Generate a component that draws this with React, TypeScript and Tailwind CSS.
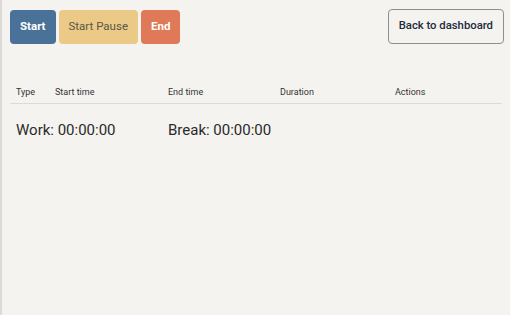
export default function App() {
  return (
    <div
      className="w-[510px] h-[315px] bg-[#f5f3ef] border-l-2 border-[#dcdad6] text-[#2b2b2b] overflow-hidden"
      style={{ fontFamily: 'Roboto, "Liberation Sans", sans-serif' }}
    >
      <div className="flex items-center justify-between pl-[8px] pr-[6px] pt-[9px]">
        <div className="flex gap-[3px]">
          <button className="h-[34px] px-[10px] rounded-[4px] bg-[#4a7197] text-white text-[11.5px] font-bold">
            Start
          </button>
          <button className="h-[34px] px-[10px] rounded-[4px] bg-[#eaca86] text-[#5c5549] text-[11.5px]">
            Start Pause
          </button>
          <button className="h-[34px] px-[10px] rounded-[4px] bg-[#e07957] text-white text-[11.5px] font-bold">
            End
          </button>
        </div>
        <button className="h-[35px] px-[10px] rounded-[4px] border border-[#8f8f8f] text-[#222a3a] text-[11.3px] font-medium">
          Back to dashboard
        </button>
      </div>

      <div className="mx-[8px] mt-[38px]">
        <div className="flex items-center h-[22px] border-b border-[#dddbd8] text-[9px] text-[#333]">
          <div className="w-[45px] pl-[6px]">Type</div>
          <div className="w-[113px]">Start time</div>
          <div className="w-[112px]">End time</div>
          <div className="w-[115px]">Duration</div>
          <div>Actions</div>
        </div>
        <div className="flex items-center mt-[15px] text-[15px] text-[#2a2a2a]">
          <div className="w-[158px] pl-[6px]">Work: 00:00:00</div>
          <div>Break: 00:00:00</div>
        </div>
      </div>
    </div>
  );
}
